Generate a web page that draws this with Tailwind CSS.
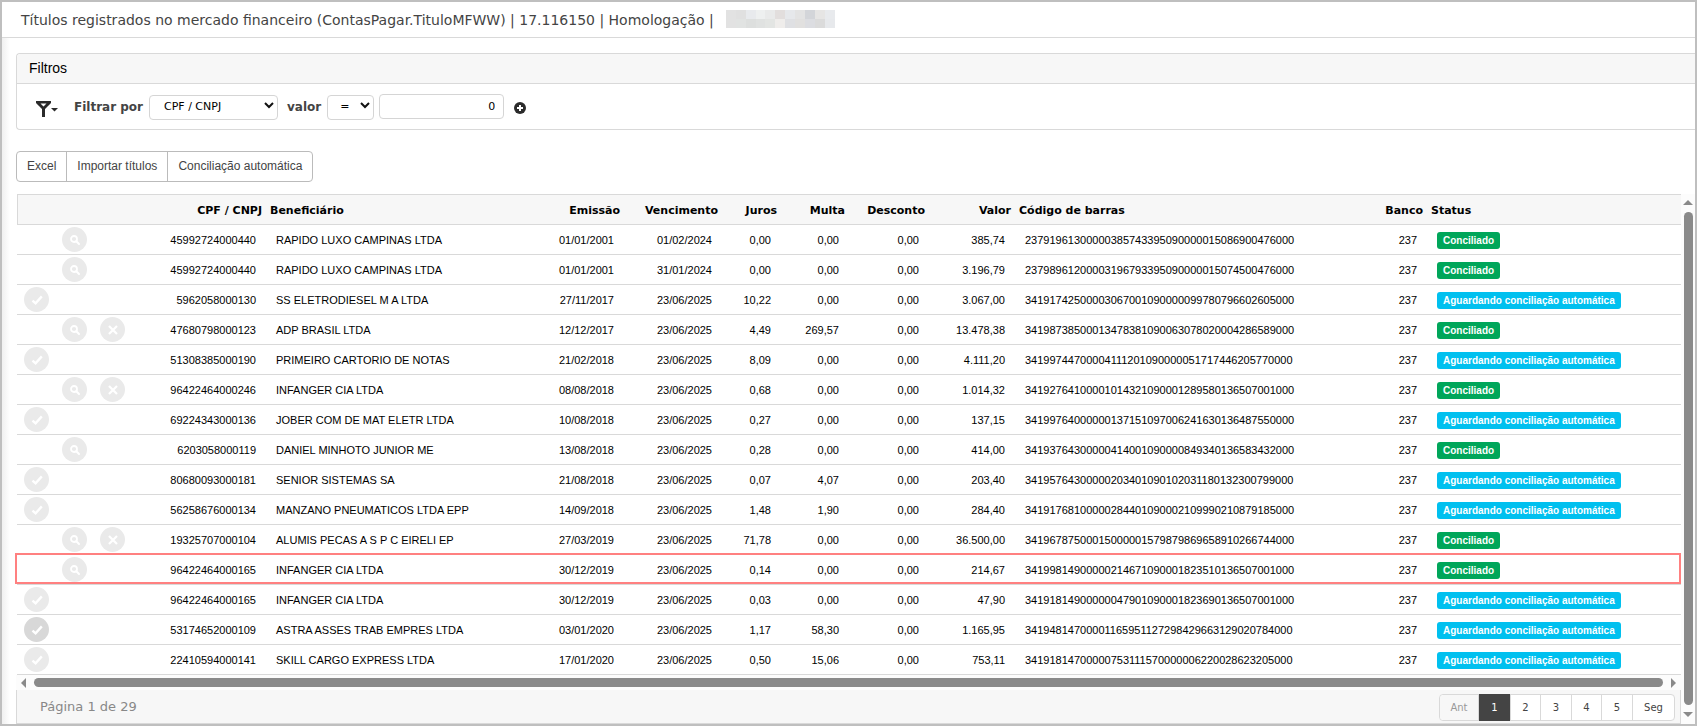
<!doctype html>
<html lang="pt-BR">
  <head>
    <meta charset="UTF-8" />
    <meta name="viewport" content="width=device-width, initial-scale=1.0" />
    <title>Títulos registrados no mercado financeiro</title>
    <script src="https://cdn.jsdelivr.net/npm/@tailwindcss/browser@4"></script>
  </head>

  <body class="bg-white font-['Liberation_Sans',Arial,sans-serif] text-black">
    <!-- Icon sprites -->
    <svg class="hidden" xmlns="http://www.w3.org/2000/svg">
      <symbol id="icon-search" viewBox="0 0 12 12">
        <circle cx="5" cy="5" r="3" fill="none" stroke="currentColor" stroke-width="1.8" />
        <path d="M7.3 7.3L10 10" stroke="currentColor" stroke-width="2" stroke-linecap="round" />
      </symbol>
      <symbol id="icon-check" viewBox="0 0 12 12">
        <path d="M1.5 6.6L4.6 9.4L10.8 2.4" fill="none" stroke="currentColor" stroke-width="2.4" />
      </symbol>
      <symbol id="icon-times" viewBox="0 0 12 12">
        <path d="M2 2L10 10M10 2L2 10" fill="none" stroke="currentColor" stroke-width="2.2" />
      </symbol>
    </svg>

    <div class="flex flex-col min-h-screen border-2 border-[#bfbfbf]">
      <header class="flex items-center h-9 pl-[19px] border-b border-[#d9d9d9]">
        <h1 class="font-['DejaVu_Sans',Verdana,sans-serif] text-[14px] leading-5 text-[#444] whitespace-nowrap">
          Títulos registrados no mercado financeiro (ContasPagar.TituloMFWW) | 17.116150 | Homologação |
        </h1>
        <div class="grid grid-cols-11 grid-rows-2 w-[109px] h-[18px] ml-3 -mt-0.5" aria-hidden="true">
          <span class="bg-[#e2e2e2]"></span><span class="bg-[#e0e0e0]"></span><span class="bg-[#e8eaed]"></span><span class="bg-[#eef0f0]"></span><span class="bg-[#e9eaea]"></span><span class="bg-[#e2dedd]"></span><span class="bg-[#e6e8eb]"></span><span class="bg-[#e3e3e3]"></span><span class="bg-[#d3d5d9]"></span><span class="bg-[#e6e5e4]"></span><span class="bg-[#e8eaed]"></span>
          <span class="bg-[#e2e2e2]"></span><span class="bg-[#e1e3e2]"></span><span class="bg-[#dddfde]"></span><span class="bg-[#e0e2e1]"></span><span class="bg-[#e3e5e3]"></span><span class="bg-[#efedeb]"></span><span class="bg-[#dfe0e3]"></span><span class="bg-[#e1e0df]"></span><span class="bg-[#dcdde1]"></span><span class="bg-[#dbdbdb]"></span><span class="bg-[#e7e9ec]"></span>
        </div>
      </header>

      <div class="flex flex-col grow bg-linear-to-r from-[#f0f0f0] to-white to-[8px]">
        <main class="flex flex-col grow pl-3.5 pt-[15px]">
          <!-- Filtros -->
          <section class="border border-r-0 border-[#d9d9d9] rounded-l bg-white">
            <h2 class="h-[30px] pl-3 border-b border-[#d9d9d9] bg-[#f7f7f7] rounded-tl text-[14px] leading-[29px]">Filtros</h2>
            <form class="flex items-center h-[45px] pl-[19px] font-['DejaVu_Sans',Verdana,sans-serif] text-[#444]">
              <button type="button" aria-label="Opções de filtro" class="flex items-center mt-1 text-[#2b2b2b]">
                <svg width="22" height="16" viewBox="0 0 22 16">
                  <path d="M0 0H15V2L9 8V16H6V8L0 2ZM4.500 2.500L7.500 5.500L10.500 2.500Z" fill="currentColor" fill-rule="evenodd" />
                  <path d="M15 7H22L18.500 10.500Z" fill="currentColor" />
                </svg>
              </button>
              <label for="campo" class="ml-4 text-[12px] font-bold">Filtrar por</label>
              <div class="relative ml-1.5">
                <select id="campo" class="appearance-none w-[129px] h-[25px] pl-3.5 border border-[#d5d5d5] rounded bg-white text-[11px] text-black">
                  <option>CPF / CNPJ</option>
                </select>
                <svg class="absolute right-1 top-2 pointer-events-none" width="10" height="8" viewBox="0 0 10 8"><path d="M1 2L5 6L9 2" fill="none" stroke="#111" stroke-width="2" /></svg>
              </div>
              <label for="operador" class="ml-[9px] text-[12px] font-bold">valor</label>
              <div class="relative ml-1.5">
                <select id="operador" class="appearance-none w-[47px] h-[25px] pl-3 border border-[#d5d5d5] rounded bg-white text-[11px] text-black">
                  <option>=</option>
                </select>
                <svg class="absolute right-1 top-2 pointer-events-none" width="10" height="8" viewBox="0 0 10 8"><path d="M1 2L5 6L9 2" fill="none" stroke="#111" stroke-width="2" /></svg>
              </div>
              <input type="text" aria-label="Valor do filtro" value="0" class="w-[125px] h-[25px] ml-[5px] px-2 border border-[#d5d5d5] rounded text-right text-[11px] text-black" />
              <button type="button" aria-label="Adicionar filtro" class="ml-2.5 mt-0.5 text-[#2b2b2b]">
                <svg width="12" height="12" viewBox="0 0 12 12">
                  <circle cx="6" cy="6" r="6" fill="currentColor" />
                  <path d="M6 3V9M3 6H9" stroke="#fff" stroke-width="2" />
                </svg>
              </button>
            </form>
          </section>

          <!-- Ações -->
          <div class="flex self-start mt-[21px] border border-[#bbb] rounded bg-white text-[12px] text-[#444] divide-x divide-[#bbb]">
            <button type="button" class="h-[29px] px-2.5 pb-0.5">Excel</button>
            <button type="button" class="h-[29px] px-2.5 pb-0.5">Importar títulos</button>
            <button type="button" class="h-[29px] px-2.5 pb-0.5">Conciliação automática</button>
          </div>

          <div class="flex grow mt-3">
            <div class="flex flex-col grow min-w-0">
              <div class="pl-px">
                <table class="w-full table-fixed border-separate border-spacing-0 whitespace-nowrap text-[11px] leading-4">
                  <colgroup>
                    <col class="w-[38px]" />
                    <col class="w-[38px]" />
                    <col class="w-[38px]" />
                    <col class="w-[133px]" />
                    <col class="w-[264px]" />
                    <col class="w-[94px]" />
                    <col class="w-[98px]" />
                    <col class="w-[59px]" />
                    <col class="w-[68px]" />
                    <col class="w-[80px]" />
                    <col class="w-[86px]" />
                    <col class="w-[357px]" />
                    <col class="w-[55px]" />
                    <col />
                  </colgroup>
                  <thead class="font-['DejaVu_Sans',Verdana,sans-serif]">
                    <tr id="head" class="bg-[#f7f7f7]"></tr>
                  </thead>
                  <tbody id="rows"></tbody>
                </table>
              </div>

              <!-- Barra de rolagem horizontal -->
              <div class="flex items-center h-[15px] px-[5px] gap-2 bg-[#fcfcfc]" aria-hidden="true">
                <svg width="5" height="10" viewBox="0 0 5 10"><path d="M5 0V10L0 5Z" fill="#8a8a8a" /></svg>
                <div class="grow h-[9px] rounded-full bg-[#8a8a8a]"></div>
                <svg width="5" height="10" viewBox="0 0 5 10"><path d="M0 0V10L5 5Z" fill="#8a8a8a" /></svg>
              </div>

              <!-- Paginação -->
              <footer class="flex items-center justify-between grow pl-[23px] pr-[5px] pt-0.5 border border-t-0 border-[#d9d9d9] bg-[#f7f7f7] font-['DejaVu_Sans',Verdana,sans-serif]">
                <p class="pb-0.5 text-[13px] text-[#888]">Página 1 de 29</p>
                <nav aria-label="Paginação" class="flex h-[27px] border border-[#d9d9d9] rounded bg-white text-[10px] leading-[25px] text-center text-[#444] divide-x divide-[#d9d9d9]">
                  <button type="button" disabled class="w-[39px] rounded-l bg-[#f7f7f7] text-[#999]">Ant</button>
                  <a href="#" aria-current="page" class="w-8 -my-px leading-[27px] bg-[#444] text-white">1</a>
                  <a href="#" class="w-[30px]">2</a>
                  <a href="#" class="w-[31px]">3</a>
                  <a href="#" class="w-[30px]">4</a>
                  <a href="#" class="w-[31px]">5</a>
                  <a href="#" class="w-[41px]">Seg</a>
                </nav>
              </footer>
            </div>

            <!-- Barra de rolagem vertical -->
            <div class="flex flex-col items-center shrink-0 w-3.5 pt-1.5 pb-[7px] gap-[7px] bg-[#fcfcfc]" aria-hidden="true">
              <svg width="10" height="5" viewBox="0 0 10 5"><path d="M0 5H10L5 0Z" fill="#8a8a8a" /></svg>
              <div class="grow w-[9px] rounded-full bg-[#8a8a8a]"></div>
              <svg width="10" height="5" viewBox="0 0 10 5"><path d="M0 0H10L5 5Z" fill="#8a8a8a" /></svg>
            </div>
          </div>
        </main>
      </div>
    </div>

    <script>
      const columns = [
        "", "", "", "CPF / CNPJ", "Beneficiário", "Emissão", "Vencimento", "Juros",
        "Multa", "Desconto", "Valor", "Código de barras", "Banco", "Status"
      ];
      const leftColumns = [4, 11, 13];

      // actions: c = conciliar, v = visualizar, x = cancelar
      const rows = [
        ["v", "45992724000440", "RAPIDO LUXO CAMPINAS LTDA", "01/01/2001", "01/02/2024", "0,00", "0,00", "0,00", "385,74", "23791961300000385743395090000015086900476000"],
        ["v", "45992724000440", "RAPIDO LUXO CAMPINAS LTDA", "01/01/2001", "31/01/2024", "0,00", "0,00", "0,00", "3.196,79", "23798961200003196793395090000015074500476000"],
        ["c", "5962058000130", "SS ELETRODIESEL M A LTDA", "27/11/2017", "23/06/2025", "10,22", "0,00", "0,00", "3.067,00", "34191742500003067001090000099780796602605000"],
        ["vx", "47680798000123", "ADP BRASIL LTDA", "12/12/2017", "23/06/2025", "4,49", "269,57", "0,00", "13.478,38", "34198738500013478381090063078020004286589000"],
        ["c", "51308385000190", "PRIMEIRO CARTORIO DE NOTAS", "21/02/2018", "23/06/2025", "8,09", "0,00", "0,00", "4.111,20", "34199744700004111201090000051717446205770000"],
        ["vx", "96422464000246", "INFANGER CIA LTDA", "08/08/2018", "23/06/2025", "0,68", "0,00", "0,00", "1.014,32", "34192764100001014321090001289580136507001000"],
        ["c", "69224343000136", "JOBER COM DE MAT ELETR LTDA", "10/08/2018", "23/06/2025", "0,27", "0,00", "0,00", "137,15", "34199764000000137151097006241630136487550000"],
        ["v", "6203058000119", "DANIEL MINHOTO JUNIOR ME", "13/08/2018", "23/06/2025", "0,28", "0,00", "0,00", "414,00", "34193764300000414001090000849340136583432000"],
        ["c", "80680093000181", "SENIOR SISTEMAS SA", "21/08/2018", "23/06/2025", "0,07", "4,07", "0,00", "203,40", "34195764300000203401090102031180132300799000"],
        ["c", "56258676000134", "MANZANO PNEUMATICOS LTDA EPP", "14/09/2018", "23/06/2025", "1,48", "1,90", "0,00", "284,40", "34191768100000284401090002109990210879185000"],
        ["vx", "19325707000104", "ALUMIS PECAS A S P C EIRELI EP", "27/03/2019", "23/06/2025", "71,78", "0,00", "0,00", "36.500,00", "34196787500015000001579879869658910266744000"],
        ["v", "96422464000165", "INFANGER CIA LTDA", "30/12/2019", "23/06/2025", "0,14", "0,00", "0,00", "214,67", "34199814900000214671090001823510136507001000", "marked"],
        ["c", "96422464000165", "INFANGER CIA LTDA", "30/12/2019", "23/06/2025", "0,03", "0,00", "0,00", "47,90", "34191814900000047901090001823690136507001000"],
        ["c", "53174652000109", "ASTRA ASSES TRAB EMPRES LTDA", "03/01/2020", "23/06/2025", "1,17", "58,30", "0,00", "1.165,95", "34194814700001165951127298429663129020784000", "active"],
        ["c", "22410594000141", "SKILL CARGO EXPRESS LTDA", "17/01/2020", "23/06/2025", "0,50", "15,06", "0,00", "753,11", "34191814700000753111570000006220028623205000"]
      ];

      document.getElementById("head").innerHTML = columns.map((name, i) => {
        const align = leftColumns.includes(i) ? "text-left pl-1.5" : "text-right pr-0.5";
        const edge = i === 0 ? "border-l" : "";
        return `<th class="h-[31px] pt-0.5 border-y border-[#d9d9d9] font-bold ${edge} ${align}">${name}</th>`;
      }).join("");

      const icons = {
        c: ["icon-check", "Conciliar"],
        v: ["icon-search", "Visualizar"],
        x: ["icon-times", "Cancelar"]
      };

      function actionCell(row, key, i) {
        const tone = row[10] === "active" ? "bg-[#d8d8d8]" : "bg-[#eaeaea]";
        const mark = i === 0 && row[10] === "marked"
          ? '<span class="absolute z-10 -top-0.5 bottom-px -left-0.5 right-0 border-2 border-[#ff8080] pointer-events-none"></span>'
          : "";
        const button = row[0].includes(key)
          ? `<button type="button" aria-label="${icons[key][1]}" class="flex items-center justify-center size-[25px] rounded-full text-white ${tone}"><svg width="12" height="12"><use href="#${icons[key][0]}" /></svg></button>`
          : "";
        return `<td class="h-[30px] pl-[7px] border-b border-[#d9d9d9]">${mark}${button}</td>`;
      }

      document.getElementById("rows").innerHTML = rows.map((row) => {
        const actions = ["c", "v", "x"].map((key, i) => actionCell(row, key, i)).join("");
        const values = [...row.slice(1, 10), "237"].map((value, i) => {
          const align = i === 1 || i === 8 ? "text-left pl-3" : "text-right pr-2";
          return `<td class="border-b border-[#d9d9d9] ${align}">${value}</td>`;
        }).join("");
        const badge = row[0] === "c"
          ? '<span class="inline-block h-[17px] px-1.5 rounded-[3px] bg-[#00c0ef] text-[10px] leading-[17px] font-bold text-white align-middle">Aguardando conciliação automática</span>'
          : '<span class="inline-block h-[17px] px-1.5 rounded-[3px] bg-[#00a65a] text-[10px] leading-[17px] font-bold text-white align-middle">Conciliado</span>';
        return `<tr class="relative bg-white">${actions}${values}<td class="pt-0.5 pl-3 border-b border-[#d9d9d9]">${badge}</td></tr>`;
      }).join("");
    </script>
  </body>
</html>
